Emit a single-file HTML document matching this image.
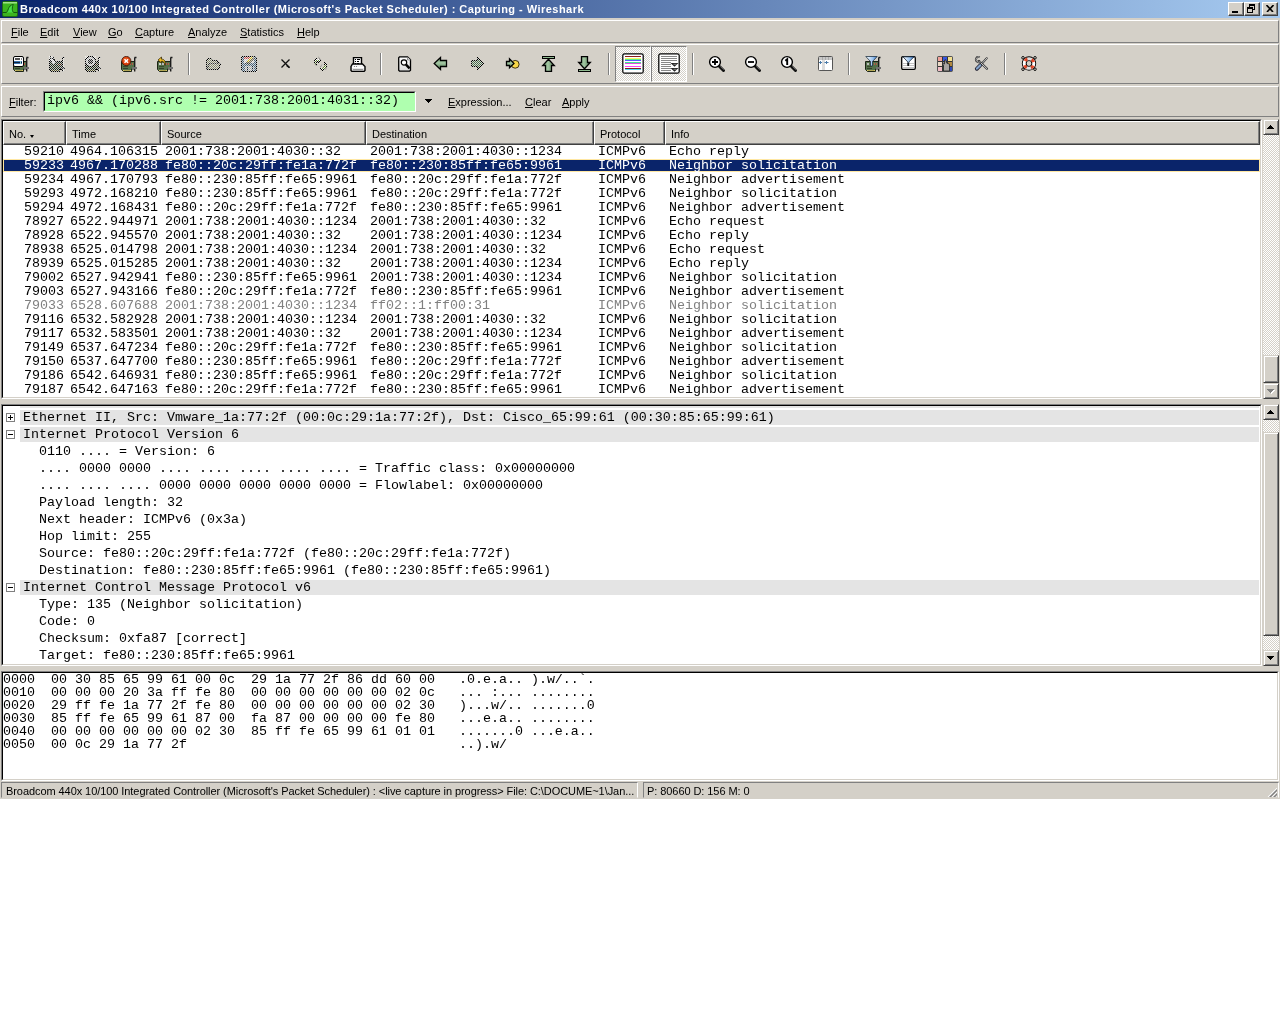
<!DOCTYPE html>
<html lang="en"><head><meta charset="utf-8"><title>Wireshark</title>
<style>
*{box-sizing:border-box;margin:0;padding:0}
html,body{width:1280px;height:1024px;background:#fff;overflow:hidden}
body{position:relative;font-family:"Liberation Sans",sans-serif;font-size:11px;color:#000}
.a{position:absolute}
.win{will-change:transform;position:absolute;left:0;top:0;width:1280px;height:799px;background:#d4d0c8}
.title{position:absolute;left:0;top:0;width:1280px;height:18px;background:linear-gradient(to right,#0a246a,#a6caf0)}
.title .t{position:absolute;left:20px;top:3px;color:#fff;font-weight:bold;font-size:11px;line-height:13px;white-space:nowrap;letter-spacing:0.47px}
.tb{position:absolute;top:2px;width:16px;height:14px;background:#d4d0c8;border:1px solid;border-color:#fff #404040 #404040 #fff;box-shadow:inset -1px -1px 0 #808080}
.raised{position:absolute;border:1px solid;border-color:#fff #808080 #808080 #fff}
.menu span{position:absolute;top:26px;line-height:13px;white-space:nowrap}
u{text-decoration:underline;text-underline-offset:1px}
.mono{font-family:"Liberation Mono",monospace;font-size:13.33px;white-space:pre}
.sunk{position:absolute;border:1px solid;border-color:#808080 #fff #fff #808080}
.sunk2{position:absolute;border:2px solid;border-color:#404040 #d4d0c8 #d4d0c8 #404040;outline:0}
.hdr{position:absolute;top:121px;height:24px;background:#d4d0c8;border:1px solid;border-color:#fff #404040 #404040 #fff;box-shadow:inset -1px -1px 0 #808080;line-height:13px;padding:6px 0 0 5px;white-space:nowrap}
.row{position:absolute;left:3px;width:1257px;height:13px}
.row span{position:absolute;top:-1px;line-height:15px}
.sel{background:#0a246a;color:#fff;outline:1px solid #ffe7a2;outline-offset:-1px}
.ign{color:#808080}
.trow{position:absolute;line-height:15px;height:15px}
.tbg{position:absolute;left:20px;width:1239px;height:15px;background:#e4e4e4}
.exp{position:absolute;left:6px;width:9px;height:9px;border:1px solid #808080;background:#fff}
.exp:before{content:"";position:absolute;left:1px;top:3px;width:5px;height:1px;background:#000}
.exp.p:after{content:"";position:absolute;left:3px;top:1px;width:1px;height:5px;background:#000}
.sbtn{position:absolute;width:16px;height:16px;background:#d4d0c8;border:1px solid;border-color:#d4d0c8 #404040 #404040 #d4d0c8;box-shadow:inset 1px 1px 0 #fff,inset -1px -1px 0 #808080}
.track{position:absolute;width:16px;background-color:#fff;background-image:conic-gradient(#d4d0c8 25%,#fff 0 50%,#d4d0c8 0 75%,#fff 0);background-size:2px 2px}
.tri{position:absolute;width:0;height:0;border-left:4px solid transparent;border-right:4px solid transparent}
.sep{position:absolute;top:53px;width:2px;height:22px;border-left:1px solid #808080;border-right:1px solid #fff}
.st{position:absolute;top:785px;letter-spacing:-0.07px;line-height:13px;white-space:nowrap}
</style></head>
<body>
<div class="win">
<div class="title"><svg class="a" style="left:2px;top:1px" width="16" height="16" viewBox="0 0 16 16"><rect x="0.5" y="0.5" width="15" height="15" rx="1.5" fill="#3cb41e" stroke="#1f6a12"/><rect x="1" y="1" width="14" height="1.5" fill="#9fe088"/><path d="M4 11.5C6.500 11.5 5.500 4.200 11.300 3.500C9.800 6 10 11.500 12 11.500z" fill="#46e046"/><path d="M0.500 11.500H4C6.500 11.500 5.500 4.200 11.300 3.500C9.800 6 10 11.500 12 11.500H15.500" fill="none" stroke="#145a0c" stroke-width="1"/></svg>
<div class="t">Broadcom 440x 10/100 Integrated Controller (Microsoft's Packet Scheduler) : Capturing - Wireshark</div>
<div class="tb" style="left:1228px"><div class="a" style="left:3px;top:8px;width:6px;height:2px;background:#000"></div></div>
<div class="tb" style="left:1244px"><svg class="a" style="left:0;top:0" width="12" height="12" viewBox="0 0 12 12" shape-rendering="crispEdges"><path d="M4 1h6v2h-6zM9 3h1v4h-1zM8 6h1v1h-1zM4 3h1v1h-1z" fill="#000"/><path d="M2 4h6v2h-6zM2 6h1v4h-1zM7 6h1v4h-1zM3 9h4v1h-4z" fill="#000"/></svg></div>
<div class="tb" style="left:1262px"><svg class="a" style="left:3px;top:2px" width="8" height="7" viewBox="0 0 8 7"><path d="M0.500 0l6.500 7M7.500 0L1 7" stroke="#000" stroke-width="1.6" fill="none"/></svg></div>
</div>
<div class="raised" style="left:1px;top:20px;width:1278px;height:23px"></div>
<div class="menu">
<span style="left:11px"><u>F</u>ile</span>
<span style="left:40px"><u>E</u>dit</span>
<span style="left:73px"><u>V</u>iew</span>
<span style="left:108px"><u>G</u>o</span>
<span style="left:135px"><u>C</u>apture</span>
<span style="left:188px"><u>A</u>nalyze</span>
<span style="left:240px"><u>S</u>tatistics</span>
<span style="left:297px"><u>H</u>elp</span>
</div>
<div class="raised" style="left:1px;top:44px;width:1278px;height:40px"></div>
<div class="sep" style="left:188px"></div>
<div class="sep" style="left:380px"></div>
<div class="sep" style="left:608px"></div>
<div class="sep" style="left:692px"></div>
<div class="sep" style="left:848px"></div>
<div class="sep" style="left:1004px"></div>
<svg class="a" width="0" height="0" style="left:0;top:0"><defs>
<pattern id="ck" width="2" height="2" patternUnits="userSpaceOnUse"><rect width="1" height="1" fill="#000"/><rect x="1" y="1" width="1" height="1" fill="#000"/></pattern>
<pattern id="ckg" width="2" height="2" patternUnits="userSpaceOnUse"><rect width="2" height="2" fill="#fff"/><rect width="1" height="1" fill="#9aa89a"/><rect x="1" y="1" width="1" height="1" fill="#9aa89a"/></pattern>
<pattern id="ckb" width="2" height="2" patternUnits="userSpaceOnUse"><rect width="2" height="2" fill="#fff"/><rect width="1" height="1" fill="#8aa0b8"/><rect x="1" y="1" width="1" height="1" fill="#8aa0b8"/></pattern>
<pattern id="ckw" width="2" height="2" patternUnits="userSpaceOnUse"><rect width="2" height="2" fill="#d4d0c8"/><rect width="1" height="1" fill="#fff"/><rect x="1" y="1" width="1" height="1" fill="#fff"/></pattern>
<pattern id="wo" width="2" height="2" patternUnits="userSpaceOnUse"><rect x="1" width="1" height="1" fill="#fff" fill-opacity=".74"/><rect y="1" width="1" height="1" fill="#fff" fill-opacity=".74"/></pattern>
<pattern id="we" width="2" height="2" patternUnits="userSpaceOnUse"><rect width="1" height="1" fill="#fff" fill-opacity=".74"/><rect x="1" y="1" width="1" height="1" fill="#fff" fill-opacity=".74"/></pattern>
<pattern id="dot" width="2" height="2" patternUnits="userSpaceOnUse"><rect width="1" height="1" fill="#000"/></pattern>
<linearGradient id="gh" x1="0" y1="0" x2="0" y2="1"><stop offset="0" stop-color="#6a946a"/><stop offset=".45" stop-color="#a4c8a4"/><stop offset="1" stop-color="#557e55"/></linearGradient>
<linearGradient id="gv" x1="0" y1="0" x2="1" y2="0"><stop offset="0" stop-color="#6a946a"/><stop offset=".45" stop-color="#a4c8a4"/><stop offset="1" stop-color="#557e55"/></linearGradient>
<linearGradient id="fun" x1="0" y1="0" x2="1" y2="0"><stop offset="0" stop-color="#fff"/><stop offset=".6" stop-color="#9cc4f0"/><stop offset="1" stop-color="#3a78c8"/></linearGradient>
<linearGradient id="pg" x1="0" y1="0" x2="0" y2="1"><stop offset="0" stop-color="#fff"/><stop offset="1" stop-color="#d8d8d8"/></linearGradient>
</defs></svg>
<svg class="a" style="left:13px;top:56px" width="16" height="16" viewBox="0 0 16 16"><path d="M0.500 5.500H13.500V13H10.500V15.500H2.500L0.500 13.500z" fill="#54714a" stroke="#1c2416"/>
<rect x="2" y="10" width="5" height="1" fill="#3a4a2e"/><rect x="2" y="12" width="5" height="1" fill="#33402a"/>
<rect x="2" y="14" width="8" height="1" fill="#d8c868"/><rect x="3.500" y="14" width="1" height="1" fill="#8a8440"/><rect x="5.500" y="14" width="1" height="1" fill="#8a8440"/><rect x="7.500" y="14" width="1" height="1" fill="#8a8440"/>
<rect x="9" y="7" width="1" height="2" fill="#b85848"/><rect x="11" y="7" width="1" height="2" fill="#b85848"/>
<path d="M13.700 1.500V15.500M13.500 1.500H15.500" stroke="#1c1c1c" stroke-width="1.400" fill="none"/>
<rect x="11" y="11" width="5" height="2" fill="#707070"/><rect x="0.500" y="0.500" width="10" height="10" rx="1.500" fill="#fff" stroke="#000"/><rect x="2" y="2" width="5" height="2" fill="#555"/><rect x="8" y="2" width="1" height="2" fill="#888"/><rect x="1" y="5" width="8" height="1" fill="#3c78b4"/><rect x="1" y="6" width="8" height="1" fill="#10243c"/><rect x="1" y="7" width="8" height="1" fill="#3c78b4"/><rect x="7" y="5" width="1" height="3" fill="#9cc"/></svg>
<svg class="a" style="left:49px;top:56px" width="16" height="16" viewBox="0 0 16 16"><g shape-rendering="crispEdges"><path d="M0.500 5.500H13.500V13H10.500V15.500H2.500L0.500 13.500z" fill="#222e1c" stroke="#000"/>
<rect x="2" y="14" width="8" height="1" fill="#5a5428"/>
<rect x="9" y="8" width="1" height="1" fill="#5a2018"/><rect x="11" y="8" width="1" height="1" fill="#5a2018"/>
<path d="M13.500 1V16M13 1.500H15.500" stroke="#000" stroke-width="1" fill="none"/>
<rect x="11" y="11" width="5" height="2" fill="#333"/><path d="M1 1L5.500 7.500" stroke="#d0d0d0" stroke-width="2.600"/><path d="M1.500 0v2.500h2.500V0" fill="none" stroke="#222" stroke-width="1"/><path d="M0 3l4 5M4.500 2.500L7 7" stroke="#222" stroke-width="1" fill="none"/><path d="M0 5H13V1H16V2H15V11H16V13H15V16H13V13H11V16H2L0 14zM0 0H5V5H0z" fill="url(#we)"/></g></svg>
<svg class="a" style="left:85px;top:56px" width="16" height="16" viewBox="0 0 16 16"><g shape-rendering="crispEdges"><path d="M0.500 5.500H13.500V13H10.500V15.500H2.500L0.500 13.500z" fill="#222e1c" stroke="#000"/>
<rect x="2" y="14" width="8" height="1" fill="#5a5428"/>
<rect x="9" y="8" width="1" height="1" fill="#5a2018"/><rect x="11" y="8" width="1" height="1" fill="#5a2018"/>
<path d="M13.500 1V16M13 1.500H15.500" stroke="#000" stroke-width="1" fill="none"/>
<rect x="11" y="11" width="5" height="2" fill="#333"/><circle cx="5.500" cy="5.500" r="5" fill="#b8b8b8" stroke="#000"/><circle cx="5.500" cy="5.500" r="2.500" fill="#222"/><path d="M0 5H13V1H16V2H15V11H16V13H15V16H13V13H11V16H2L0 14zM0 0H11V11H0z" fill="url(#we)"/></g></svg>
<svg class="a" style="left:121px;top:56px" width="16" height="16" viewBox="0 0 16 16"><path d="M0.500 5.500H13.500V13H10.500V15.500H2.500L0.500 13.500z" fill="#54714a" stroke="#1c2416"/>
<rect x="2" y="10" width="5" height="1" fill="#3a4a2e"/><rect x="2" y="12" width="5" height="1" fill="#33402a"/>
<rect x="2" y="14" width="8" height="1" fill="#d8c868"/><rect x="3.500" y="14" width="1" height="1" fill="#8a8440"/><rect x="5.500" y="14" width="1" height="1" fill="#8a8440"/><rect x="7.500" y="14" width="1" height="1" fill="#8a8440"/>
<rect x="9" y="7" width="1" height="2" fill="#b85848"/><rect x="11" y="7" width="1" height="2" fill="#b85848"/>
<path d="M13.700 1.500V15.500M13.500 1.500H15.500" stroke="#1c1c1c" stroke-width="1.400" fill="none"/>
<rect x="11" y="11" width="5" height="2" fill="#707070"/><circle cx="5.300" cy="5" r="4.600" fill="#d8400c" stroke="#3a1408" stroke-width=".8"/><circle cx="4.500" cy="4" r="2.500" fill="#f06a30" opacity=".6"/><path d="M3.500 3.200l3.600 3.600M7.100 3.200L3.500 6.800" stroke="#fff" stroke-width="1.500"/></svg>
<svg class="a" style="left:157px;top:56px" width="16" height="16" viewBox="0 0 16 16"><path d="M0.500 5.500H13.500V13H10.500V15.500H2.500L0.500 13.500z" fill="#54714a" stroke="#1c2416"/>
<rect x="2" y="10" width="5" height="1" fill="#3a4a2e"/><rect x="2" y="12" width="5" height="1" fill="#33402a"/>
<rect x="2" y="14" width="8" height="1" fill="#d8c868"/><rect x="3.500" y="14" width="1" height="1" fill="#8a8440"/><rect x="5.500" y="14" width="1" height="1" fill="#8a8440"/><rect x="7.500" y="14" width="1" height="1" fill="#8a8440"/>
<rect x="9" y="7" width="1" height="2" fill="#b85848"/><rect x="11" y="7" width="1" height="2" fill="#b85848"/>
<path d="M13.700 1.500V15.500M13.500 1.500H15.500" stroke="#1c1c1c" stroke-width="1.400" fill="none"/>
<rect x="11" y="11" width="5" height="2" fill="#707070"/><rect x="2" y="7" width="2" height="2" fill="#ccc"/><rect x="5" y="7" width="2" height="2" fill="#bbb"/><path d="M8 9.500C9 5 7 3 4.500 3.200V1L1 4l3.500 3V5.200C6.500 5 7.300 6.500 8 9.500z" fill="#f4c020" stroke="#3a2c08" stroke-width=".8"/></svg>
<svg class="a" style="left:206px;top:58px" width="16" height="13" viewBox="0 0 16 13"><g shape-rendering="crispEdges"><path d="M.5 11.500V2.500L2.500 .5H5.500L7 2.500H11.500V4.500H13.500L14.500 5.500L12.500 11.500z" fill="#84866c" stroke="#000"/><path d="M.5 11.500L3.500 5.500H13" fill="none" stroke="#333"/><path d="M0 12V2L2 0H6L7.500 2H12V4H14L15 5.500L13 12z" fill="url(#wo)"/></g></svg>
<svg class="a" style="left:241px;top:56px" width="16" height="16" viewBox="0 0 16 16"><g shape-rendering="crispEdges"><path d="M.5 14.500V1.500L1.500 .5H14.500L15.500 1.500V14.500L14.500 15.500H2z" fill="#4c6478" stroke="#000"/><rect x="3" y="1" width="10" height="6" fill="#c8c8c8"/><path d="M3 1.500h6M3 2.500h5" stroke="#c05050"/><rect x="4" y="10" width="9" height="5" fill="#a8a8a8"/><rect x="6" y="11" width="1" height="4" fill="#123"/><rect x="11" y="10" width="1" height="5" fill="#123"/><path d="M11.500 1L6 6.500" stroke="#c8b020" stroke-width="1.800" shape-rendering="auto"/><path d="M13 2L7 8" stroke="#3a3010" stroke-width="1.600" shape-rendering="auto"/><path d="M4 8L6.500 5.500L7.500 7z" fill="#000" shape-rendering="auto"/><path d="M0 15V1L1 0H15L16 1V16H1.500z" fill="url(#we)"/></g></svg>
<svg class="a" style="left:280px;top:58px" width="11" height="11" viewBox="0 0 11 11"><path d="M1.500 1.500L9.500 9.500M9.500 1.500L1.500 9.500" stroke="#111" stroke-width="1.250"/><path d="M6.500 7.500l3 2.300" stroke="#111" stroke-width="1.400"/></svg>
<svg class="a" style="left:313px;top:56px" width="16" height="16" viewBox="0 0 16 16"><path d="M5 0l3.500 4.500-2-.5z" fill="#777" opacity=".8"/><path d="M1.500 6.500l3 3.500-2.500-1z" fill="#777" opacity=".7"/><path d="M9.500 7.500l-3 4 1.500-.5z" fill="#777" opacity=".8"/><path d="M14.500 9.500l-1.500 4.500-1-.5z" fill="#777" opacity=".7"/><g shape-rendering="crispEdges"><path d="M3 2h1v1h-1zM2 3h1v1h-1zM1 4h1v1h-1zM7 4h1v1h-1zM4 5h1v1h-1zM6 5h1v1h-1zM1 6h1v1h-1zM3 6h1v1h-1zM5 6h1v1h-1zM3 8h1v1h-1zM11 6h1v1h-1zM12 7h1v1h-1zM11 8h1v1h-1zM13 8h1v1h-1zM13 10h1v1h-1zM7 12h1v1h-1zM8 13h1v1h-1zM10 13h1v1h-1zM9 14h1v1h-1z" fill="#000"/><path d="M3 3h1v1h-1zM5 3h1v1h-1zM2 4h1v1h-1zM4 4h1v1h-1zM6 4h1v1h-1zM2 6h1v1h-1zM12 8h1v1h-1zM12 10h1v1h-1zM8 12h1v1h-1zM9 13h1v1h-1zM11 11h1v1h-1zM10 12h1v1h-1z" fill="#fff"/><path d="M3 4h1v1h-1zM5 4h1v1h-1zM2 5h1v1h-1zM2 7h1v1h-1zM12 9h1v1h-1zM11 10h1v1h-1zM10 11h1v1h-1zM9 12h1v1h-1zM11 12h1v1h-1zM12 11h1v1h-1z" fill="#5a8030"/></g></svg>
<svg class="a" style="left:350px;top:57px" width="16" height="15" viewBox="0 0 16 15"><path d="M3.500 7.500V.5H11.500V7.500" fill="#fff" stroke="#000" stroke-width="1.400"/><path d="M5 2.500h1M7 2.500h3M5 4.500h1M7 4.500h2M5 6.500h1M7 6.500h2" stroke="#000"/><path d="M2.500 7H12.500L15 9.500V13.500L14 14.500H2L1 13.500V9.500z" fill="url(#pg)" stroke="#000" stroke-width="1.400"/><path d="M2 10.500H14" stroke="#fff"/><path d="M3 12.500H13" stroke="#999"/><path d="M4 9.500h1M6 9.500h1" stroke="#888"/></svg>
<svg class="a" style="left:398px;top:56px" width="14" height="16" viewBox="0 0 14 16"><path d="M1.500 .8H9.500L12.500 3.800V14.200L11.500 15.200H1.500L.7 14.200V1.800z" fill="url(#pg)" stroke="#000" stroke-width="1.300"/><path d="M9.500 1v3h3" fill="#ddd" stroke="#777" stroke-width=".7"/><circle cx="6" cy="6.500" r="2.700" fill="#fff" stroke="#000" stroke-width="1.200"/><path d="M8 8.700L11.600 12.300" stroke="#000" stroke-width="2.500"/></svg>
<svg class="a" style="left:433px;top:56px" width="15" height="15" viewBox="0 0 15 15"><path d="M1.200 7.500L7.500 1.500V4.500H13.500V10.500H7.500V13.500z" fill="url(#gh)" stroke="#000" stroke-width="1.300" stroke-linejoin="miter"/></svg>
<svg class="a" style="left:470px;top:56px" width="15" height="15" viewBox="0 0 15 15"><g shape-rendering="crispEdges"><path d="M13.500 7.500L7.500 1.500V4.500H1.500V10.500H7.500V13.500z" fill="#4c6c4c" stroke="#000"/><path d="M14 7.500L7 .5V4H1V11H7V14.500z" fill="url(#wo)"/></g></svg>
<svg class="a" style="left:505px;top:57px" width="16" height="13" viewBox="0 0 16 13"><circle cx="10.200" cy="7.300" r="3.900" fill="#f8d848" stroke="#2a2208" stroke-width=".9"/><path d="M1.500 4.500H4.500V1.800L9 6.500L4.500 10.800V8.500H1.500z" fill="url(#gh)" stroke="#000" stroke-width="1.300"/></svg>
<svg class="a" style="left:541px;top:56px" width="15" height="16" viewBox="0 0 15 16"><rect x="1.500" y=".5" width="12" height="2" fill="#8fba8f" stroke="#000"/><path d="M7.500 3.200L13.300 9.500H10.500V15.500H4.500V9.500H1.700z" fill="url(#gv)" stroke="#000" stroke-width="1.300"/></svg>
<svg class="a" style="left:577px;top:56px" width="15" height="16" viewBox="0 0 15 16"><rect x="1.500" y="13.500" width="12" height="2" fill="#8fba8f" stroke="#000"/><path d="M7.500 12.800L13.300 6.500H10.500V.5H4.500V6.500H1.700z" fill="url(#gv)" stroke="#000" stroke-width="1.300"/></svg>
<div class="a" style="left:615px;top:46px;width:36px;height:36px;border:1px solid;border-color:#808080 #fff #fff #808080;background-color:#fff;background-image:conic-gradient(#d4d0c8 25%,#fff 0 50%,#d4d0c8 0 75%,#fff 0);background-size:2px 2px"></div>
<div class="a" style="left:651px;top:46px;width:36px;height:36px;border:1px solid;border-color:#808080 #fff #fff #808080;background-color:#fff;background-image:conic-gradient(#d4d0c8 25%,#fff 0 50%,#d4d0c8 0 75%,#fff 0);background-size:2px 2px"></div>
<svg class="a" style="left:622px;top:53px" width="22" height="21" viewBox="0 0 22 21"><rect x=".8" y=".8" width="20.400" height="19.400" rx="1.800" fill="#fff" stroke="#000" stroke-width="1.250"/><rect x="3" y="3" width="16" height="1" fill="#8b1c1c"/><rect x="3" y="5" width="16" height="1" fill="#f8f860"/><rect x="3" y="6" width="16" height="1" fill="#58e890"/><rect x="3" y="7" width="16" height="1" fill="#5858f8"/><rect x="3" y="9" width="16" height="1" fill="#40e890"/><rect x="3" y="10" width="16" height="1" fill="#e048e0"/><rect x="3" y="13" width="16" height="1" fill="#f848f8"/><rect x="3" y="15" width="16" height="1" fill="#8b1c1c"/><rect x="3" y="16" width="16" height="1" fill="#48d8f0"/></svg>
<svg class="a" style="left:658px;top:53px" width="22" height="21" viewBox="0 0 22 21"><rect x=".8" y=".8" width="20.400" height="19.400" rx="1.800" fill="#fff" stroke="#000" stroke-width="1.250"/><rect x="3" y="3" width="16" height="1" fill="#888"/><rect x="3" y="5" width="16" height="1" fill="#888"/><rect x="3" y="7" width="16" height="1" fill="#888"/><rect x="3" y="9" width="16" height="1" fill="#888"/><rect x="3" y="11" width="16" height="1" fill="#888"/><rect x="3" y="13" width="16" height="1" fill="#888"/><rect x="3" y="15" width="16" height="1" fill="#888"/><rect x="3" y="17" width="16" height="1" fill="#888"/><rect x="13" y="9" width="7" height="10" fill="#fff"/><path d="M3 11.500h10M3 13.500h10M3 15.500h10M3 17.500h10" stroke="#888"/><path d="M12.500 10h8l-4 3.800z" fill="#222"/><path d="M12.500 15h8l-4 3.800z" fill="#222"/><path d="M15.500 11.300h3" stroke="#999" stroke-width=".8"/><path d="M15.500 16.300h3" stroke="#999" stroke-width=".8"/></svg>
<svg class="a" style="left:708px;top:55px" width="18" height="18" viewBox="0 0 18 18"><path d="M11.500 11.500L15.500 15.500" stroke="#111" stroke-width="3" stroke-linecap="round"/><path d="M12.500 11.300L16 14.800" stroke="#888" stroke-width=".8"/><circle cx="7" cy="7" r="5.400" fill="#fff" stroke="#000" stroke-width="1.400"/><path d="M4 7h6M7 4v6" stroke="#000" stroke-width="1.800"/></svg>
<svg class="a" style="left:744px;top:55px" width="18" height="18" viewBox="0 0 18 18"><path d="M11.500 11.500L15.500 15.500" stroke="#111" stroke-width="3" stroke-linecap="round"/><path d="M12.500 11.300L16 14.800" stroke="#888" stroke-width=".8"/><circle cx="7" cy="7" r="5.400" fill="#fff" stroke="#000" stroke-width="1.400"/><path d="M4 7h6" stroke="#000" stroke-width="1.800"/></svg>
<svg class="a" style="left:780px;top:55px" width="18" height="18" viewBox="0 0 18 18"><path d="M11.500 11.500L15.500 15.500" stroke="#111" stroke-width="3" stroke-linecap="round"/><path d="M12.500 11.300L16 14.800" stroke="#888" stroke-width=".8"/><circle cx="7" cy="7" r="5.400" fill="#fff" stroke="#000" stroke-width="1.400"/><path d="M5.300 5.800L7.200 4.300V10" stroke="#000" stroke-width="1.900" fill="none"/></svg>
<svg class="a" style="left:818px;top:56px" width="15" height="15" viewBox="0 0 15 15"><rect x=".5" y=".5" width="14" height="14" rx="1" fill="#fff" stroke="#555"/><rect x="1" y="1" width="13" height="3" fill="#c8c8c8"/><path d="M4.500 1v3M7.500 1v3M10.500 1v3" stroke="#aaa"/><rect x="4" y="4" width="3" height="10" fill="#ddd"/><path d="M1 6.500h3M2.500 5v3M6.500 6.500h4M8.500 5v3" stroke="#4a7aa8" stroke-width="1"/></svg>
<svg class="a" style="left:865px;top:56px" width="16" height="16" viewBox="0 0 16 16"><path d="M0.500 5.500H13.500V13H10.500V15.500H2.500L0.500 13.500z" fill="#54714a" stroke="#1c2416"/>
<rect x="2" y="10" width="5" height="1" fill="#3a4a2e"/><rect x="2" y="12" width="5" height="1" fill="#33402a"/>
<rect x="2" y="14" width="8" height="1" fill="#d8c868"/><rect x="3.500" y="14" width="1" height="1" fill="#8a8440"/><rect x="5.500" y="14" width="1" height="1" fill="#8a8440"/><rect x="7.500" y="14" width="1" height="1" fill="#8a8440"/>
<rect x="9" y="7" width="1" height="2" fill="#b85848"/><rect x="11" y="7" width="1" height="2" fill="#b85848"/>
<path d="M13.700 1.500V15.500M13.500 1.500H15.500" stroke="#1c1c1c" stroke-width="1.400" fill="none"/>
<rect x="11" y="11" width="5" height="2" fill="#707070"/><rect x="2" y="7" width="2" height="2" fill="#bbb"/><path d="M.8 .5H12.200L7.500 5.500V10H5.500V5.500z" fill="url(#fun)" stroke="#234" stroke-width=".8"/></svg>
<svg class="a" style="left:901px;top:56px" width="15" height="14" viewBox="0 0 15 14"><rect x=".7" y=".7" width="13.600" height="12.600" rx="1.200" fill="#fff" stroke="#000" stroke-width="1.300"/><path d="M2 7.500h11M2 9.500h11M2 11.500h11" stroke="#c4c4c4"/><path d="M2 .8H13L7.800 6V9.500H6.800V6z" fill="url(#fun)" stroke="#123" stroke-width=".8"/><rect x="6.500" y="7" width="1.500" height="3" fill="#111"/></svg>
<svg class="a" style="left:937px;top:56px" width="16" height="16" viewBox="0 0 16 16"><rect x=".5" y=".5" width="15" height="15" rx="1" fill="#333" stroke="#555"/><rect x="1" y="1" width="4" height="4" fill="#f0a098"/><rect x="6" y="1" width="4" height="4" fill="#3858e0"/><rect x="11" y="1" width="4" height="4" fill="#f4e090"/><rect x="1" y="6" width="4" height="4" fill="#ead8c4"/><rect x="6" y="6" width="4" height="4" fill="#999"/><rect x="11" y="6" width="4" height="4" fill="#b08840"/><rect x="1" y="11" width="4" height="4" fill="#f0bcc4"/><rect x="6" y="11" width="4" height="4" fill="#50b050"/><rect x="11" y="11" width="4" height="4" fill="#2c48b8"/><path d="M6.500 15V9L5.500 8l.8-.8L7.500 8V4.200l1.200-.5L9.500 7l3 1.200V15z" fill="#a8a4a0" stroke="#222" stroke-width=".8"/></svg>
<svg class="a" style="left:974px;top:56px" width="16" height="16" viewBox="0 0 16 16"><path d="M12.800 2.200L7.500 8" stroke="#333" stroke-width="2" stroke-linecap="round"/><path d="M12.800 2.200L7.500 8" stroke="#e8e8e8" stroke-width=".8" stroke-linecap="round"/><path d="M6.500 9L2.800 12.800" stroke="#223" stroke-width="3.800" stroke-linecap="round"/><path d="M6.300 9.200L3 12.600" stroke="#84a4cc" stroke-width="2.200" stroke-linecap="round"/><path d="M5 5L13 12.800" stroke="#333" stroke-width="2.200" stroke-linecap="round"/><path d="M5.500 5.500L13 12.800" stroke="#e4e4e4" stroke-width=".9" stroke-linecap="round"/><path d="M5.800 1A2.700 2.700 0 1 0 6.500 5.500" fill="none" stroke="#333" stroke-width="2"/><path d="M5.800 1A2.700 2.700 0 1 0 6.500 5.500" fill="none" stroke="#ddd" stroke-width=".7"/></svg>
<svg class="a" style="left:1021px;top:56px" width="16" height="15" viewBox="0 0 16 15"><circle cx="2" cy="1.800" r="1.300" fill="none" stroke="#000" stroke-width=".9"/><circle cx="14" cy="1.800" r="1.300" fill="none" stroke="#000" stroke-width=".9"/><circle cx="2" cy="13.200" r="1.300" fill="none" stroke="#000" stroke-width=".9"/><circle cx="14" cy="13.200" r="1.300" fill="none" stroke="#000" stroke-width=".9"/><circle cx="8" cy="7.500" r="4.800" fill="none" stroke="#000" stroke-width="4.800"/><circle cx="8" cy="7.500" r="4.800" fill="none" stroke="#fff" stroke-width="3"/><circle cx="8" cy="7.500" r="4.800" fill="none" stroke="#ec4c2c" stroke-width="3" stroke-dasharray="3.100 4.440" stroke-dashoffset="-2.220"/><circle cx="8" cy="7.500" r="4.800" fill="none" stroke="#000" stroke-opacity=".12" stroke-width="3" stroke-dasharray="7.540 7.540" stroke-dashoffset="-3.770"/></svg>
<div class="raised" style="left:1px;top:86px;width:1278px;height:31px"></div>
<span class="a" style="left:9px;top:96px;line-height:13px"><u>F</u>ilter:</span>
<div class="a" style="left:43px;top:91px;width:373px;height:21px;border:1px solid;border-color:#808080 #fff #fff #808080"><div style="width:100%;height:100%;border:1px solid;border-color:#000 #afffaf #afffaf #000;background:#afffaf"></div></div>
<span class="a mono" style="left:47px;top:93px;line-height:15px">ipv6 &amp;&amp; (ipv6.src != 2001:738:2001:4031::32)</span>
<svg class="a" style="left:425px;top:99px" width="7" height="4" viewBox="0 0 7 4" shape-rendering="crispEdges"><path d="M0 0h7v1h-1v1h-1v1h-1v1h-1v-1h-1v-1h-1v-1h-1z" fill="#000"/></svg>
<span class="a" style="left:448px;top:96px;line-height:13px"><u>E</u>xpression...</span>
<span class="a" style="left:525px;top:96px;line-height:13px"><u>C</u>lear</span>
<span class="a" style="left:562px;top:96px;line-height:13px"><u>A</u>pply</span>
<div class="a" style="left:1px;top:119px;width:1261px;height:280px;border:1px solid;border-color:#808080 #fff #fff #808080"><div style="width:100%;height:100%;border:1px solid;border-color:#000 #d4d0c8 #d4d0c8 #000;background:#fff"></div></div>
<div class="hdr" style="left:3px;width:63px">No.<div class="tri" style="left:26px;top:13px;border-left-width:2.5px;border-right-width:2.5px;border-top:3px solid #000"></div></div>
<div class="hdr" style="left:66px;width:95px">Time</div>
<div class="hdr" style="left:161px;width:205px">Source</div>
<div class="hdr" style="left:366px;width:228px">Destination</div>
<div class="hdr" style="left:594px;width:71px">Protocol</div>
<div class="hdr" style="left:665px;width:595px">Info</div>
<div class="mono">
<div class="row " style="top:145px"><span style="left:21px">59210</span><span style="left:67px">4964.106315</span><span style="left:162px">2001:738:2001:4030::32</span><span style="left:367px">2001:738:2001:4030::1234</span><span style="left:595px">ICMPv6</span><span style="left:666px">Echo reply</span></div>
<div class="row sel" style="top:159px"><span style="left:21px">59233</span><span style="left:67px">4967.170288</span><span style="left:162px">fe80::20c:29ff:fe1a:772f</span><span style="left:367px">fe80::230:85ff:fe65:9961</span><span style="left:595px">ICMPv6</span><span style="left:666px">Neighbor solicitation</span></div>
<div class="row " style="top:173px"><span style="left:21px">59234</span><span style="left:67px">4967.170793</span><span style="left:162px">fe80::230:85ff:fe65:9961</span><span style="left:367px">fe80::20c:29ff:fe1a:772f</span><span style="left:595px">ICMPv6</span><span style="left:666px">Neighbor advertisement</span></div>
<div class="row " style="top:187px"><span style="left:21px">59293</span><span style="left:67px">4972.168210</span><span style="left:162px">fe80::230:85ff:fe65:9961</span><span style="left:367px">fe80::20c:29ff:fe1a:772f</span><span style="left:595px">ICMPv6</span><span style="left:666px">Neighbor solicitation</span></div>
<div class="row " style="top:201px"><span style="left:21px">59294</span><span style="left:67px">4972.168431</span><span style="left:162px">fe80::20c:29ff:fe1a:772f</span><span style="left:367px">fe80::230:85ff:fe65:9961</span><span style="left:595px">ICMPv6</span><span style="left:666px">Neighbor advertisement</span></div>
<div class="row " style="top:215px"><span style="left:21px">78927</span><span style="left:67px">6522.944971</span><span style="left:162px">2001:738:2001:4030::1234</span><span style="left:367px">2001:738:2001:4030::32</span><span style="left:595px">ICMPv6</span><span style="left:666px">Echo request</span></div>
<div class="row " style="top:229px"><span style="left:21px">78928</span><span style="left:67px">6522.945570</span><span style="left:162px">2001:738:2001:4030::32</span><span style="left:367px">2001:738:2001:4030::1234</span><span style="left:595px">ICMPv6</span><span style="left:666px">Echo reply</span></div>
<div class="row " style="top:243px"><span style="left:21px">78938</span><span style="left:67px">6525.014798</span><span style="left:162px">2001:738:2001:4030::1234</span><span style="left:367px">2001:738:2001:4030::32</span><span style="left:595px">ICMPv6</span><span style="left:666px">Echo request</span></div>
<div class="row " style="top:257px"><span style="left:21px">78939</span><span style="left:67px">6525.015285</span><span style="left:162px">2001:738:2001:4030::32</span><span style="left:367px">2001:738:2001:4030::1234</span><span style="left:595px">ICMPv6</span><span style="left:666px">Echo reply</span></div>
<div class="row " style="top:271px"><span style="left:21px">79002</span><span style="left:67px">6527.942941</span><span style="left:162px">fe80::230:85ff:fe65:9961</span><span style="left:367px">2001:738:2001:4030::1234</span><span style="left:595px">ICMPv6</span><span style="left:666px">Neighbor solicitation</span></div>
<div class="row " style="top:285px"><span style="left:21px">79003</span><span style="left:67px">6527.943166</span><span style="left:162px">fe80::20c:29ff:fe1a:772f</span><span style="left:367px">fe80::230:85ff:fe65:9961</span><span style="left:595px">ICMPv6</span><span style="left:666px">Neighbor advertisement</span></div>
<div class="row ign" style="top:299px"><span style="left:21px">79033</span><span style="left:67px">6528.607688</span><span style="left:162px">2001:738:2001:4030::1234</span><span style="left:367px">ff02::1:ff00:31</span><span style="left:595px">ICMPv6</span><span style="left:666px">Neighbor solicitation</span></div>
<div class="row " style="top:313px"><span style="left:21px">79116</span><span style="left:67px">6532.582928</span><span style="left:162px">2001:738:2001:4030::1234</span><span style="left:367px">2001:738:2001:4030::32</span><span style="left:595px">ICMPv6</span><span style="left:666px">Neighbor solicitation</span></div>
<div class="row " style="top:327px"><span style="left:21px">79117</span><span style="left:67px">6532.583501</span><span style="left:162px">2001:738:2001:4030::32</span><span style="left:367px">2001:738:2001:4030::1234</span><span style="left:595px">ICMPv6</span><span style="left:666px">Neighbor advertisement</span></div>
<div class="row " style="top:341px"><span style="left:21px">79149</span><span style="left:67px">6537.647234</span><span style="left:162px">fe80::20c:29ff:fe1a:772f</span><span style="left:367px">fe80::230:85ff:fe65:9961</span><span style="left:595px">ICMPv6</span><span style="left:666px">Neighbor solicitation</span></div>
<div class="row " style="top:355px"><span style="left:21px">79150</span><span style="left:67px">6537.647700</span><span style="left:162px">fe80::230:85ff:fe65:9961</span><span style="left:367px">fe80::20c:29ff:fe1a:772f</span><span style="left:595px">ICMPv6</span><span style="left:666px">Neighbor advertisement</span></div>
<div class="row " style="top:369px"><span style="left:21px">79186</span><span style="left:67px">6542.646931</span><span style="left:162px">fe80::230:85ff:fe65:9961</span><span style="left:367px">fe80::20c:29ff:fe1a:772f</span><span style="left:595px">ICMPv6</span><span style="left:666px">Neighbor solicitation</span></div>
<div class="row " style="top:383px"><span style="left:21px">79187</span><span style="left:67px">6542.647163</span><span style="left:162px">fe80::20c:29ff:fe1a:772f</span><span style="left:367px">fe80::230:85ff:fe65:9961</span><span style="left:595px">ICMPv6</span><span style="left:666px">Neighbor advertisement</span></div>
</div>
<div class="track" style="left:1263px;top:119px;height:280px"></div>
<div class="sbtn" style="left:1263px;top:119px"><svg class="a" style="left:3px;top:5px" width="7" height="4" viewBox="0 0 7 4" shape-rendering="crispEdges"><path d="M3 0h1v1h1v1h1v1h1v1h-7v-1h1v-1h1v-1h1z" fill="#000"/></svg></div>
<div class="sbtn" style="left:1263px;top:383px"><svg class="a" style="left:4px;top:6px" width="7" height="4" viewBox="0 0 7 4" shape-rendering="crispEdges"><path d="M0 0h7v1h-1v1h-1v1h-1v1h-1v-1h-1v-1h-1v-1h-1z" fill="#fff"/></svg><svg class="a" style="left:3px;top:5px" width="7" height="4" viewBox="0 0 7 4" shape-rendering="crispEdges"><path d="M0 0h7v1h-1v1h-1v1h-1v1h-1v-1h-1v-1h-1v-1h-1z" fill="#808080"/></svg></div>
<div class="sbtn" style="left:1263px;top:355px;height:28px"></div>
<div class="a" style="left:1px;top:404px;width:1261px;height:262px;border:1px solid;border-color:#808080 #fff #fff #808080"><div style="width:100%;height:100%;border:1px solid;border-color:#000 #d4d0c8 #d4d0c8 #000;background:#fff"></div></div>
<div class="a" style="left:20px;top:406px;width:1239px;height:2px;background:#e4e4e4"></div>
<div class="mono">
<div class="tbg" style="top:410px"></div>
<div class="exp p" style="top:413px"></div>
<div class="trow" style="left:23px;top:410px">Ethernet II, Src: Vmware_1a:77:2f (00:0c:29:1a:77:2f), Dst: Cisco_65:99:61 (00:30:85:65:99:61)</div>
<div class="tbg" style="top:427px"></div>
<div class="exp m" style="top:430px"></div>
<div class="trow" style="left:23px;top:427px">Internet Protocol Version 6</div>
<div class="trow" style="left:39px;top:444px">0110 .... = Version: 6</div>
<div class="trow" style="left:39px;top:461px">.... 0000 0000 .... .... .... .... .... = Traffic class: 0x00000000</div>
<div class="trow" style="left:39px;top:478px">.... .... .... 0000 0000 0000 0000 0000 = Flowlabel: 0x00000000</div>
<div class="trow" style="left:39px;top:495px">Payload length: 32</div>
<div class="trow" style="left:39px;top:512px">Next header: ICMPv6 (0x3a)</div>
<div class="trow" style="left:39px;top:529px">Hop limit: 255</div>
<div class="trow" style="left:39px;top:546px">Source: fe80::20c:29ff:fe1a:772f (fe80::20c:29ff:fe1a:772f)</div>
<div class="trow" style="left:39px;top:563px">Destination: fe80::230:85ff:fe65:9961 (fe80::230:85ff:fe65:9961)</div>
<div class="tbg" style="top:580px"></div>
<div class="exp m" style="top:583px"></div>
<div class="trow" style="left:23px;top:580px">Internet Control Message Protocol v6</div>
<div class="trow" style="left:39px;top:597px">Type: 135 (Neighbor solicitation)</div>
<div class="trow" style="left:39px;top:614px">Code: 0</div>
<div class="trow" style="left:39px;top:631px">Checksum: 0xfa87 [correct]</div>
<div class="trow" style="left:39px;top:648px">Target: fe80::230:85ff:fe65:9961</div>
</div>
<div class="track" style="left:1263px;top:404px;height:262px"></div>
<div class="sbtn" style="left:1263px;top:404px"><svg class="a" style="left:3px;top:5px" width="7" height="4" viewBox="0 0 7 4" shape-rendering="crispEdges"><path d="M3 0h1v1h1v1h1v1h1v1h-7v-1h1v-1h1v-1h1z" fill="#000"/></svg></div>
<div class="sbtn" style="left:1263px;top:650px"><svg class="a" style="left:3px;top:5px" width="7" height="4" viewBox="0 0 7 4" shape-rendering="crispEdges"><path d="M0 0h7v1h-1v1h-1v1h-1v1h-1v-1h-1v-1h-1v-1h-1z" fill="#000"/></svg></div>
<div class="sbtn" style="left:1263px;top:432px;height:204px"></div>
<div class="a" style="left:1px;top:671px;width:1278px;height:110px;border:1px solid;border-color:#808080 #fff #fff #808080"><div style="width:100%;height:100%;border:1px solid;border-color:#000 #d4d0c8 #d4d0c8 #000;background:#fff"></div></div>
<div class="mono a" style="left:3px;top:673px;line-height:13px">0000  00 30 85 65 99 61 00 0c  29 1a 77 2f 86 dd 60 00   .0.e.a.. ).w/..`.
0010  00 00 00 20 3a ff fe 80  00 00 00 00 00 00 02 0c   ... :... ........
0020  29 ff fe 1a 77 2f fe 80  00 00 00 00 00 00 02 30   )...w/.. .......0
0030  85 ff fe 65 99 61 87 00  fa 87 00 00 00 00 fe 80   ...e.a.. ........
0040  00 00 00 00 00 00 02 30  85 ff fe 65 99 61 01 01   .......0 ...e.a..
0050  00 0c 29 1a 77 2f                                  ..).w/</div>
<div class="sunk" style="left:1px;top:782px;width:637px;height:16px;border-bottom-color:#d4d0c8"></div>
<div class="sunk" style="left:643px;top:782px;width:636px;height:16px;border-bottom-color:#d4d0c8"></div>
<span class="st" style="left:6px">Broadcom 440x 10/100 Integrated Controller (Microsoft's Packet Scheduler) : &lt;live capture in progress&gt; File: C:\DOCUME~1\Jan...</span>
<span class="st" style="left:647px">P: 80660 D: 156 M: 0</span>
<svg class="a" style="left:1265px;top:788px" width="12" height="9" viewBox="0 0 12 9"><path d="M3 9.500L12.500 0M7 9.500L12.500 4M11 9.500L12.500 8" stroke="#fff" stroke-width="1.300"/><path d="M4.500 9.500L12.500 1.500M8.500 9.500L12.500 5.500M11.500 10L12.500 9" stroke="#808080" stroke-width="1.450"/></svg>
</div>
</body></html>
